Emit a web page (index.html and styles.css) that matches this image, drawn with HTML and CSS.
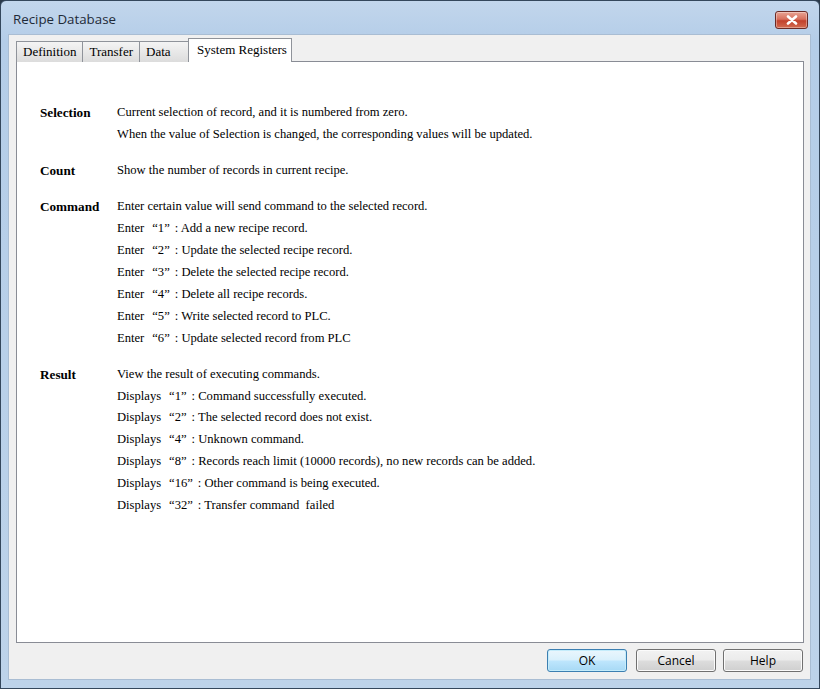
FILE: index.html
```html
<!DOCTYPE html>
<html>
<head>
<meta charset="utf-8">
<link rel="stylesheet" href="styles.css">
</head>
<body>
<div class="window">
  <div class="titlebar">
    <span class="title">Recipe Database</span>
    <span class="close"><svg width="14" height="10" viewBox="0 0 14 10"><path d="M3 1.5 L11 8.5 M11 1.5 L3 8.5" stroke="#fff" stroke-width="2.6" stroke-linecap="round"/></svg></span>
  </div>
  <div class="client">
    <div class="tabs">
      <div class="tab">Definition</div>
      <div class="tab">Transfer</div>
      <div class="tab data">Data</div>
      <div class="tab active">System Registers</div>
    </div>
    <div class="panel">
      <div class="section">
        <div class="label">Selection</div>
        <div class="desc">
          <div class="line">Current selection of record, and it is numbered from zero.</div>
          <div class="line">When the value of Selection is changed, the corresponding values will be updated.</div>
        </div>
      </div>
      <div class="section">
        <div class="label">Count</div>
        <div class="desc">
          <div class="line">Show the number of records in current recipe.</div>
        </div>
      </div>
      <div class="section">
        <div class="label">Command</div>
        <div class="desc">
          <div class="line">Enter certain value will send command to the selected record.</div>
          <div class="line"><span class="k">Enter</span><span class="q">“1”</span>: Add a new recipe record.</div>
          <div class="line"><span class="k">Enter</span><span class="q">“2”</span>: Update the selected recipe record.</div>
          <div class="line"><span class="k">Enter</span><span class="q">“3”</span>: Delete the selected recipe record.</div>
          <div class="line"><span class="k">Enter</span><span class="q">“4”</span>: Delete all recipe records.</div>
          <div class="line"><span class="k">Enter</span><span class="q">“5”</span>: Write selected record to PLC.</div>
          <div class="line"><span class="k">Enter</span><span class="q">“6”</span>: Update selected record from PLC</div>
        </div>
      </div>
      <div class="section">
        <div class="label">Result</div>
        <div class="desc">
          <div class="line">View the result of executing commands.</div>
          <div class="line"><span class="k">Displays</span><span class="q">“1”</span>: Command successfully executed.</div>
          <div class="line"><span class="k">Displays</span><span class="q">“2”</span>: The selected record does not exist.</div>
          <div class="line"><span class="k">Displays</span><span class="q">“4”</span>: Unknown command.</div>
          <div class="line"><span class="k">Displays</span><span class="q">“8”</span>: Records reach limit (10000 records), no new records can be added.</div>
          <div class="line"><span class="k">Displays</span><span class="q">“16”</span>: Other command is being executed.</div>
          <div class="line"><span class="k">Displays</span><span class="q">“32”</span>: Transfer command&nbsp; failed</div>
        </div>
      </div>
    </div>
    <div class="buttons">
      <div class="btn default">OK</div>
      <div class="btn cancel">Cancel</div>
      <div class="btn">Help</div>
    </div>
  </div>
</div>
</body>
</html>
```
FILE: styles.css
```css
html, body {
  margin: 0;
  padding: 0;
  background: #2b3a4a;
}
.window {
  width: 820px;
  height: 689px;
  box-sizing: border-box;
  border: 1px solid #34475c;
  border-radius: 6px 6px 0 0;
  background: linear-gradient(to bottom, #c2d6ec 0px, #b4cde8 40px, #bdd3ea 100%);
  display: flex;
  flex-direction: column;
  overflow: hidden;
}
.titlebar {
  height: 33px;
  display: flex;
  align-items: flex-start;
  justify-content: space-between;
  padding: 0 11px 0 12px;
  box-sizing: border-box;
}
.title {
  font-family: "Open Sans", "DejaVu Sans", sans-serif;
  font-size: 13.3px;
  color: #1e2a38;
  margin-top: 9px;
}
.close {
  margin-top: 10px;
  width: 33px;
  height: 18px;
  box-sizing: border-box;
  border: 1px solid #6b2a25;
  border-radius: 3px;
  background: linear-gradient(to bottom, #e8a494 0%, #d7705d 45%, #c2412c 55%, #d36b50 100%);
  display: flex;
  align-items: center;
  justify-content: center;
  box-shadow: inset 0 0 0 1px rgba(255,255,255,0.35);
}
.client {
  flex: 1;
  margin: 0 8px 8px 7px;
  background: #f0f0f0;
  border: 1px solid #a9bdd3;
  display: flex;
  flex-direction: column;
  padding: 3px 0 0 7px;
  box-sizing: border-box;
}
.tabs {
  display: flex;
  align-items: flex-end;
  height: 24px;
  margin-bottom: -1px;
  position: relative;
  z-index: 1;
}
.tab {
  font-family: "Liberation Serif", "DejaVu Serif", serif;
  font-size: 13px;
  color: #000;
  height: 21px;
  line-height: 20px;
  box-sizing: border-box;
  padding: 0 6px;
  border: 1px solid #8f939a;
  border-bottom: none;
  margin-right: -1px;
  background: linear-gradient(to bottom, #f4f4f4 0%, #e8e8e8 50%, #dcdcdc 100%);
}
.tab.data {
  width: 50px;
}
.tab.active {
  height: 24px;
  line-height: 21px;
  background: #fff;
  width: 104px;
  padding: 0 0 0 8px;
  margin-left: 0;
}
.panel {
  flex: 1;
  background: #fff;
  border: 1px solid #898c95;
  margin-right: 6px;
  padding: 40px 0 0 23px;
  box-sizing: border-box;
  font-family: "Liberation Serif", "DejaVu Serif", serif;
  font-size: 12.6px;
  color: #000;
}
.section {
  display: flex;
  margin-bottom: 14.2px;
}
.label {
  width: 77px;
  font-weight: bold;
  font-size: 13.2px;
  line-height: 21.9px;
  flex-shrink: 0;
}
.desc {
  flex: 1;
}
.line {
  line-height: 21.9px;
  white-space: pre;
}
.k {
  display: inline-block;
}
.q {
  display: inline-block;
  margin: 0 5px 0 8px;
}
.buttons {
  height: 36px;
  display: flex;
  justify-content: flex-end;
  align-items: flex-start;
  padding: 6px 7px 0 0;
  box-sizing: border-box;
}
.btn {
  width: 80px;
  height: 23px;
  box-sizing: border-box;
  border: 1px solid #707070;
  border-radius: 3px;
  background: linear-gradient(to bottom, #f2f2f2 0%, #ebebeb 48%, #dddddd 52%, #cfcfcf 100%);
  box-shadow: inset 0 0 0 1px #fbfbfb;
  font-family: "Open Sans", "DejaVu Sans", sans-serif;
  font-size: 12px;
  color: #000;
  display: flex;
  align-items: center;
  justify-content: center;
}
.btn.default {
  margin-right: 9px;
  border-color: #3c7fb1;
  background: linear-gradient(to bottom, #eaf6fd 0%, #d9f0fc 48%, #bee6fd 52%, #a7d9f5 100%);
  box-shadow: inset 0 0 0 1px #c4ecfb;
}
.btn.cancel {
  margin-right: 7px;
}
```
